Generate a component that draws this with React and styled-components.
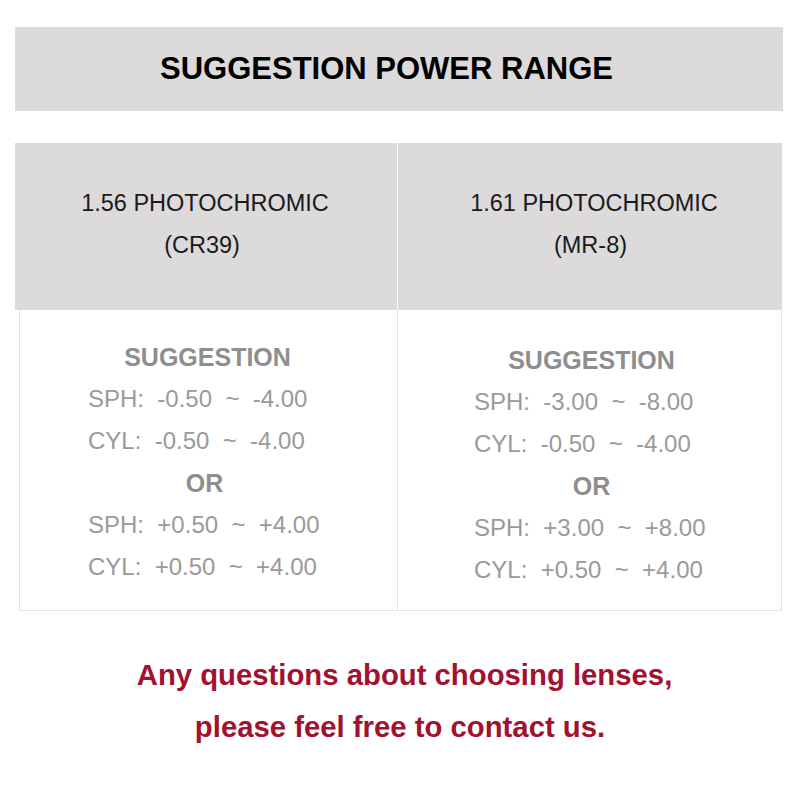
import React from 'react'
import styled, {createGlobalStyle} from 'styled-components'

const GlobalStyle = createGlobalStyle`
  body {
    margin: 0;
    background: #fff;
    font-family: "Liberation Sans", Arial, sans-serif;
  }
`

const Page = styled.div`
  width: 800px;
  height: 800px;
  padding-top: 27px;
  box-sizing: border-box;
  background: #fff;
`

const Banner = styled.div`
  margin-left: 15px;
  width: 768px;
  height: 84px;
  background: #dcdadb;
  display: flex;
  align-items: center;
  justify-content: center;
`

const Title = styled.h1`
  margin: 0 0 0 -25px;
  font-size: 31px;
  font-weight: 700;
  color: #000;
`

const Table = styled.div`
  margin-top: 32px;
  margin-left: 15px;
  width: 767px;
`

const HeadRow = styled.div`
  display: grid;
  grid-template-columns: 382px 384px;
  column-gap: 1px;
  height: 167px;
  background: #fff;
`

const HeadCell = styled.div`
  background: #dcdadb;
  padding-top: 39px;
  box-sizing: border-box;
  text-align: center;
  font-size: 23.5px;
  line-height: 42px;
  color: #1a1a1a;
`

const HeadLine = styled.div`
  margin-left: ${p => p.$shift || 0}px;
`

const BodyRow = styled.div`
  margin-left: 4px;
  width: 763px;
  height: 301px;
  box-sizing: border-box;
  border: 1px solid #e4e4e4;
  border-top: none;
  display: grid;
  grid-template-columns: 378px 1fr;
`

const BodyCell = styled.div`
  padding-top: ${p => p.$top}px;
  box-sizing: border-box;
  border-right: ${p => (p.$divider ? '1px solid #e4e4e4' : 'none')};
`

const Label = styled.div`
  text-align: center;
  font-size: 25px;
  font-weight: 700;
  line-height: 42px;
  color: #8e8e8e;
  margin-left: ${p => p.$shift || 0}px;
`

const Range = styled.div`
  padding-left: ${p => p.$indent}px;
  font-size: 24px;
  line-height: 42px;
  color: #9a9a9a;
  white-space: pre;
`

const Note = styled.div`
  margin-top: 38px;
  text-align: center;
  font-size: 29.3px;
  font-weight: 700;
  line-height: 52px;
  color: #a3112e;
`

const NoteLine = styled.p`
  margin: 0 0 0 ${p => p.$shift || 0}px;
`

const columns = [
  {
    name: '1.56 PHOTOCHROMIC',
    material: '(CR39)',
    nameShift: -2,
    materialShift: -8,
    top: 26,
    indent: 68,
    labelShift: -2,
    orShift: -8,
    minus: ['SPH:  -0.50  ~  -4.00', 'CYL:  -0.50  ~  -4.00'],
    plus: ['SPH:  +0.50  ~  +4.00', 'CYL:  +0.50  ~  +4.00'],
  },
  {
    name: '1.61 PHOTOCHROMIC',
    material: '(MR-8)',
    nameShift: 8,
    materialShift: 1,
    top: 29,
    indent: 76,
    labelShift: 4,
    orShift: 4,
    minus: ['SPH:  -3.00  ~  -8.00', 'CYL:  -0.50  ~  -4.00'],
    plus: ['SPH:  +3.00  ~  +8.00', 'CYL:  +0.50  ~  +4.00'],
  },
]

const App = () => {
  return (
    <Page>
      <GlobalStyle />
      <Banner>
        <Title>SUGGESTION POWER RANGE</Title>
      </Banner>
      <Table>
        <HeadRow>
          {columns.map(col => (
            <HeadCell key={col.name}>
              <HeadLine $shift={col.nameShift}>{col.name}</HeadLine>
              <HeadLine $shift={col.materialShift}>{col.material}</HeadLine>
            </HeadCell>
          ))}
        </HeadRow>
        <BodyRow>
          {columns.map((col, i) => (
            <BodyCell key={col.name} $top={col.top} $divider={i === 0}>
              <Label $shift={col.labelShift}>SUGGESTION</Label>
              {col.minus.map(line => <Range key={line} $indent={col.indent}>{line}</Range>)}
              <Label $shift={col.orShift}>OR</Label>
              {col.plus.map(line => <Range key={line} $indent={col.indent}>{line}</Range>)}
            </BodyCell>
          ))}
        </BodyRow>
      </Table>
      <Note>
        <NoteLine $shift={9}>Any questions about choosing lenses,</NoteLine>
        <NoteLine>please feel free to contact us.</NoteLine>
      </Note>
    </Page>
  )
}

export default App
